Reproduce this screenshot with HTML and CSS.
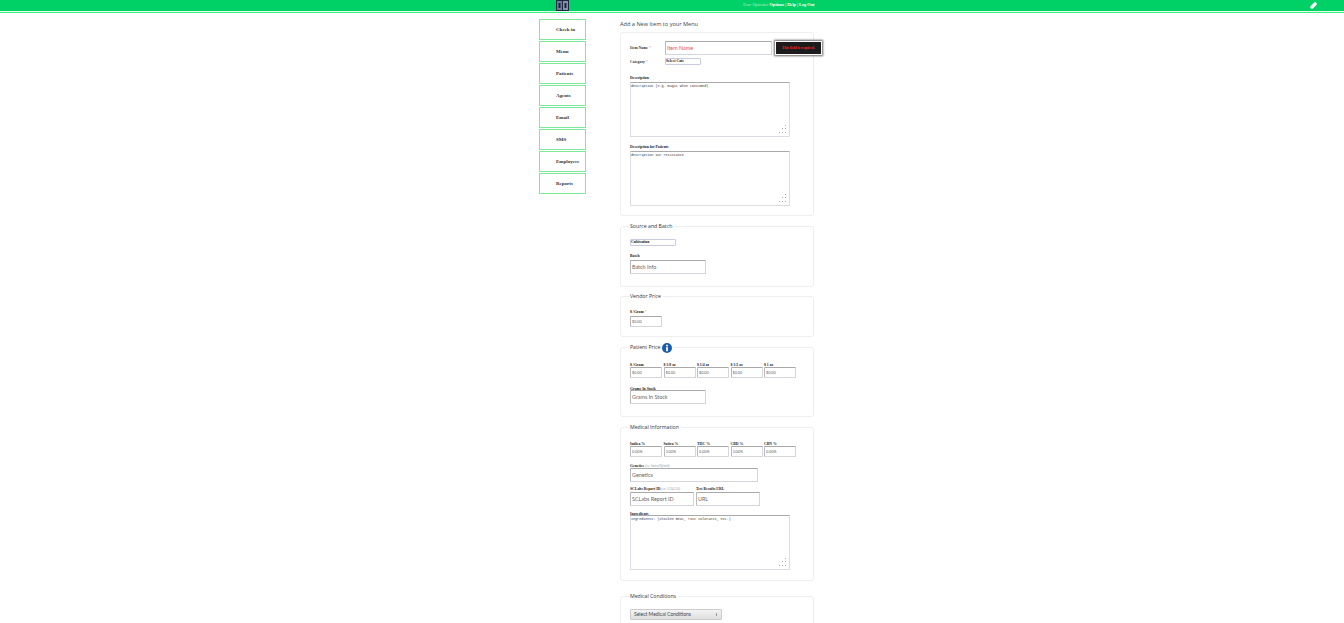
FILE: index.html
```html
<!DOCTYPE html>
<html lang="en">
<head>
<meta charset="UTF-8">
<meta name="viewport" content="width=device-width, initial-scale=1.0">
<title>Add Menu Item</title>
<link rel="stylesheet" href="styles.css">
</head>
<body>
    <!-- Top bar -->
    <div class="topbar">
        <div class="logo">
            <svg width="13" height="11" viewBox="0 0 13 11">
                <rect width="13" height="11" fill="#1c2740"/>
                <rect x="1" y="1" width="5" height="9" fill="#6f7a94"/>
                <rect x="7" y="1" width="5" height="9" fill="#8791a8"/>
                <rect x="2.5" y="3" width="2" height="5" fill="#1c2740"/>
                <rect x="8.5" y="3" width="2" height="5" fill="#1c2740"/>
            </svg>
        </div>
        <div class="user-links"><i>User Operator</i> <b>Options | Help | Log Out</b></div>
        <svg class="pill" width="9" height="9" viewBox="0 0 9 9">
            <rect x="0.5" y="2.8" width="8" height="3.4" rx="1.7" fill="#fff" transform="rotate(-45 4.5 4.5)"/>
        </svg>
    </div>

    <div class="container">
        <!-- Sidebar -->
        <div class="sidebar">
            <a class="side-link">Check in</a>
            <a class="side-link">Menu</a>
            <a class="side-link">Patients</a>
            <a class="side-link">Agents</a>
            <a class="side-link">Email</a>
            <a class="side-link">SMS</a>
            <a class="side-link">Employees</a>
            <a class="side-link">Reports</a>
        </div>

        <!-- Main form -->
        <div class="content">
            <h1 class="page-title">Add a New Item to your Menu</h1>

            <fieldset class="box box-item">
                <div class="name-row">
                    <label class="inline-label">Item Name <em>*</em></label>
                    <input class="text-input name-input err" placeholder="Item Name">
                    <div class="tip">This field is required.</div>
                </div>
                <div class="cat-row">
                    <label class="inline-label">Category <em>*</em></label>
                    <div class="mini-select">Select Cats</div>
                </div>
                <label class="field-label first">Description</label>
                <div class="area">description (e.g. magic when consumed)<span class="grip"></span></div>
                <label class="field-label second">Description for Patients</label>
                <div class="area">description our resistance<span class="grip"></span></div>
            </fieldset>

            <fieldset class="box box-source">
                <legend>Source and Batch</legend>
                <div class="mini-select wide">Cultivation</div>
                <label class="field-label batch">Batch</label>
                <input class="text-input medium" placeholder="Batch Info">
            </fieldset>

            <fieldset class="box box-vendor">
                <legend>Vendor Price</legend>
                <label class="field-label">$ /Gram <em>*</em></label>
                <input class="text-input small" placeholder="$0.00">
            </fieldset>

            <fieldset class="box box-patient">
                <legend>Patient Price
                    <svg class="info" width="10" height="10" viewBox="0 0 10 10">
                        <circle cx="5" cy="5" r="5" fill="#1c5cab"/>
                        <rect x="4.1" y="4.2" width="1.8" height="4" fill="#fff"/>
                        <rect x="4.1" y="1.8" width="1.8" height="1.6" fill="#fff"/>
                    </svg>
                </legend>
                <div class="price-row">
                    <div><label class="field-label">$ /Gram</label><input class="text-input small" placeholder="$0.00"></div>
                    <div><label class="field-label">$ 1/8 oz</label><input class="text-input small" placeholder="$0.00"></div>
                    <div><label class="field-label">$ 1/4 oz</label><input class="text-input small" placeholder="$0.00"></div>
                    <div><label class="field-label">$ 1/2 oz</label><input class="text-input small" placeholder="$0.00"></div>
                    <div><label class="field-label">$ 1 oz</label><input class="text-input small" placeholder="$0.00"></div>
                </div>
                <label class="field-label stock">Grams In Stock</label>
                <input class="text-input medium" placeholder="Grams In Stock">
            </fieldset>

            <fieldset class="box box-medical">
                <legend>Medical Information</legend>
                <div class="price-row">
                    <div><label class="field-label">Indica %</label><input class="text-input small" placeholder="0.00%"></div>
                    <div><label class="field-label">Sativa %</label><input class="text-input small" placeholder="0.00%"></div>
                    <div><label class="field-label">THC %</label><input class="text-input small" placeholder="0.00%"></div>
                    <div><label class="field-label">CBD %</label><input class="text-input small" placeholder="0.00%"></div>
                    <div><label class="field-label">CBN %</label><input class="text-input small" placeholder="0.00%"></div>
                </div>
                <label class="field-label genetics">Genetics <small>(ex: Sativa/Hybrid)</small></label>
                <input class="text-input genetics-input" placeholder="Genetics">
                <div class="report-row">
                    <div><label class="field-label">SCLabs Report ID <small>(ex: 12345/56)</small></label><input class="text-input report" placeholder="SCLabs Report ID"></div>
                    <div><label class="field-label">Test Results URL</label><input class="text-input report" placeholder="URL"></div>
                </div>
                <label class="field-label ingredients">Ingredients</label>
                <div class="area">ingredients: (chicken meat, rust colorants, etc.)<span class="grip"></span></div>
            </fieldset>

            <fieldset class="box box-conditions">
                <legend>Medical Conditions</legend>
                <div class="cond-select">Select Medical Conditions<span class="caret"></span></div>
            </fieldset>
        </div>
    </div>
</body>
</html>
```

FILE: styles.css
```css
/* Basic page styling */
html, body {
    margin: 0;
    height: 100%;
    overflow: hidden;
    background: #fff;
    font-family: "Open Sans", sans-serif;
    color: #333;
}

/* Top bar */
.topbar {
    height: 11px;
    background: #00d166;
    border-bottom: 1px solid #d8ffe8;
    box-shadow: 0 1px 0 #3fef7f;
    display: flex;
    align-items: flex-start;
}

.logo {
    margin-left: 556px;
    height: 11px;
    line-height: 0;
}

.user-links {
    margin-left: 174px;
    font-family: "Liberation Serif", serif;
    font-size: 4.3px;
    line-height: 10px;
    color: #fff;
}

.user-links i {
    color: #b7f3d0;
}

.pill {
    margin-left: 494px;
    margin-top: 1px;
}

/* Layout */
.container {
    display: flex;
    padding: 6px 0 0 539px;
}

/* Sidebar */
.sidebar {
    width: 47px;
    margin-right: 34px;
    margin-top: 1px;
    display: flex;
    flex-direction: column;
    gap: 1px;
}

.side-link {
    box-sizing: border-box;
    height: 21px;
    border: 1px solid #7fe89a;
    padding-left: 16px;
    font-family: "Liberation Serif", serif;
    font-weight: bold;
    font-size: 5px;
    line-height: 20px;
    color: #333;
    white-space: nowrap;
}

/* Form column */
.content {
    width: 194px;
    position: relative;
}

.page-title {
    margin: 2px 0 3px;
    font-size: 5.6px;
    font-weight: normal;
    line-height: 9px;
    color: #444;
}

.box {
    box-sizing: border-box;
    margin: 0;
    padding: 9px 9px 0;
    border: 1px solid #eceef0;
    border-radius: 3px;
    min-width: 0;
}

.box legend {
    padding: 0 2px 0 0;
    font-size: 5.2px;
    line-height: 7px;
    color: #333;
}

.box-item { height: 184px; margin-bottom: 7px; padding-top: 8px; }
.box-source { height: 64px; margin-bottom: 6px; }
.box-vendor { height: 44px; margin-bottom: 7px; padding-top: 10px; }
.box-patient { height: 73px; margin-bottom: 7px; }
.box-medical { height: 157px; margin-bottom: 12px; }
.box-conditions { height: 60px; }

.name-row, .cat-row {
    display: flex;
    align-items: center;
}

.name-row { height: 14px; }
.cat-row { height: 7px; margin-top: 3px; }

.inline-label {
    width: 35px;
    font-family: "Liberation Serif", serif;
    font-weight: bold;
    font-size: 3.8px;
    color: #333;
}

em {
    color: #e66;
    font-style: normal;
    font-weight: normal;
}

.text-input {
    box-sizing: border-box;
    display: block;
    padding: 0 1px;
    border: 1px solid #d5d5dc;
    border-top-color: #a9a9a9;
    border-left-color: #b9b9c0;
    border-radius: 1px;
    background: #fff;
    font-family: Lato, sans-serif;
    font-size: 5.4px;
    outline: none;
}

.text-input::placeholder {
    color: #666;
}

.name-input {
    width: 107px;
    height: 14px;
}

.err::placeholder {
    color: #f0524f;
}

.medium {
    width: 76px;
    height: 14px;
}

.small {
    width: 32px;
    height: 11px;
    font-size: 3.8px;
}

.genetics-input {
    width: 128px;
    height: 14px;
}

.report {
    width: 64px;
    height: 14px;
}

/* Validation tooltip */
.tip {
    position: absolute;
    left: 155px;
    top: 23px;
    width: 47px;
    height: 14px;
    box-sizing: border-box;
    background: #1c1c1c;
    border: 1px solid #fff;
    box-shadow: 0 0 2px 1px #666;
    color: #f22;
    font-family: "Liberation Serif", serif;
    font-weight: bold;
    font-size: 3.6px;
    line-height: 12px;
    text-align: center;
    white-space: nowrap;
}

.mini-select {
    box-sizing: border-box;
    width: 36px;
    height: 7px;
    border: 1px solid #c8cbe0;
    border-radius: 1px;
    font-family: "Liberation Serif", serif;
    font-weight: bold;
    font-size: 3.8px;
    line-height: 5px;
    color: #111;
}

.mini-select.wide {
    width: 46px;
}

.field-label {
    display: block;
    margin-bottom: 1px;
    font-family: "Liberation Serif", serif;
    font-weight: bold;
    font-size: 3.8px;
    line-height: 5px;
    color: #222;
    white-space: nowrap;
}

.field-label small {
    font-weight: normal;
    font-size: 3.2px;
    color: #999;
}

.first { margin-top: 11px; }
.second { margin-top: 8px; }
.batch { margin-top: 8px; }
.stock { margin: 9px 0 -2px; }
.genetics { margin: 7px 0 -1px; }
.ingredients { margin: 6px 0 -3px; }

.area {
    position: relative;
    box-sizing: border-box;
    width: 160px;
    height: 55px;
    margin-top: 1px;
    padding: 1px 0 0;
    border: 1px solid #dcdce4;
    border-top-color: #a9a9a9;
    border-radius: 1px;
    font-family: "Liberation Mono", monospace;
    font-size: 3.4px;
    line-height: 5px;
    color: #333;
}

/* Little resize dots in the corner of a textarea */
.grip {
    position: absolute;
    right: 2px;
    bottom: 2px;
    width: 9px;
    height: 9px;
    background:
        linear-gradient(#aaa, #aaa) 7px 0 / 1px 1px no-repeat,
        linear-gradient(#aaa, #aaa) 7px 3px / 1px 1px no-repeat,
        linear-gradient(#aaa, #aaa) 4px 3px / 1px 1px no-repeat,
        linear-gradient(#aaa, #aaa) 7px 7px / 1px 1px no-repeat,
        linear-gradient(#aaa, #aaa) 4px 7px / 1px 1px no-repeat,
        linear-gradient(#aaa, #aaa) 1px 7px / 1px 1px no-repeat;
}

.price-row {
    display: flex;
    gap: 1.5px;
    margin-top: 3px;
}

.box-medical .price-row {
    margin-top: 2px;
}

.price-row .field-label {
    margin-bottom: -1px;
}

.report-row {
    display: flex;
    gap: 2px;
    margin-top: 5px;
}

.report-row .field-label {
    margin-bottom: 0;
}

.info {
    vertical-align: middle;
    margin: -3px 0;
}

.cond-select {
    position: relative;
    box-sizing: border-box;
    width: 92px;
    height: 11px;
    padding-left: 3px;
    border: 1px solid #ccc;
    border-radius: 1px;
    background: linear-gradient(#f4f4f4, #dedede);
    font-family: Lato, sans-serif;
    font-size: 5px;
    line-height: 9px;
    color: #444;
}

.caret {
    position: absolute;
    right: 4px;
    top: 3px;
    width: 1px;
    height: 3px;
    background: #999;
}
```
